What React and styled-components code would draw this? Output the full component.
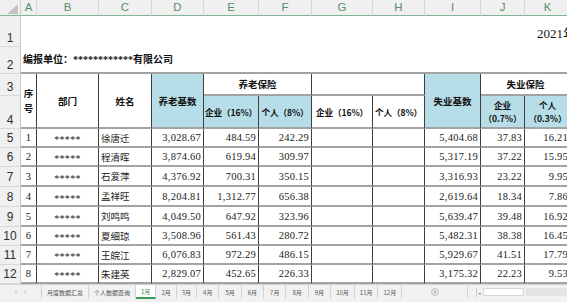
import React from "react";
import styled, { createGlobalStyle, css } from "styled-components";

const Global = createGlobalStyle`
  html, body { margin: 0; padding: 0; background: #fff; overflow: hidden; }
  #root { width: 567px; height: 302px; overflow: hidden; }
`;

const Page = styled.div`
  width: 567px;
  height: 302px;
  overflow: hidden;
  display: flex;
  flex-direction: column;
  font-family: "Liberation Serif", "Noto Sans CJK SC", serif;
  color: #1a1a1a;
`;

const Sheet = styled.div`
  display: grid;
  grid-template-columns: 21px 16px 62px 53px 52px 55px 53px 61px 52px 56px 44px 46px;
  grid-template-rows: 16px 31px 27px 22px 33px 19px 19px 20px 20px 20px 19px 19px 19px;
  width: 571px;
  flex: none;
`;

const Corner = styled.div`
  background: #f0f0f0;
  border-right: 1px solid #cfcfcf;
  border-bottom: 1px solid #7fb592;
  box-sizing: border-box;
  display: flex;
  align-items: flex-end;
  justify-content: flex-end;
  padding: 0 2px 1px 0;
`;

const ColHead = styled.div`
  box-sizing: border-box;
  background: #f0f0f0;
  border-right: 1px solid #d6d6d6;
  border-bottom: 1px solid #7fb592;
  font-family: "Liberation Sans", sans-serif;
  font-size: 11.5px;
  color: #5a8c69;
  display: flex;
  align-items: center;
  justify-content: center;
  line-height: 1;
`;

const RowHead = styled.div`
  box-sizing: border-box;
  background: #f0f0f0;
  border-right: 1px solid #c8c8c8;
  border-bottom: 1px solid #d9d9d9;
  font-family: "Liberation Sans", sans-serif;
  font-size: 12px;
  color: #2e2e2e;
  display: flex;
  justify-content: center;
  align-items: ${(p) => (p.$bottom ? "flex-end" : "center")};
  padding-bottom: ${(p) => (p.$bottom ? "2px" : "0")};
  line-height: 1;
`;

const TitleCell = styled.div`
  grid-column: span 11;
  box-sizing: border-box;
  display: flex;
  align-items: center;
  padding-left: 516px;
  padding-top: 2px;
  font-size: 13px;
  white-space: nowrap;
  overflow: hidden;
  color: #111;
`;

const UnitCell = styled.div`
  grid-column: span 11;
  box-sizing: border-box;
  display: flex;
  align-items: flex-end;
  padding: 0 0 6px 2px;
  font-size: 10px;
  font-weight: bold;
  white-space: nowrap;
  color: #111;
  border-bottom: 2px solid #a3a3a3;
`;

const Cell = styled.div`
  box-sizing: border-box;
  grid-column: span ${(p) => p.$cs || 1};
  grid-row: span ${(p) => p.$rs || 1};
  background: ${(p) => (p.$blue ? "#b7dee8" : "#fff")};
  border-right: 1px solid #3e3e3e;
  border-bottom: 2px solid #a3a3a3;
  display: flex;
  align-items: center;
  justify-content: ${(p) =>
    p.$align === "right" ? "flex-end" : p.$align === "left" ? "flex-start" : "center"};
  text-align: center;
  padding: ${(p) =>
    p.$align === "right" ? "0 2px 0 0" : p.$align === "left" ? "0 0 0 2px" : "0"};
  font-size: 10px;
  white-space: nowrap;
  overflow: hidden;
  ${(p) =>
    p.$head &&
    css`
      font-weight: bold;
      color: #111;
      font-family: "Noto Sans CJK SC", "Liberation Serif", sans-serif;
      font-size: ${p.$small ? 8.6 : 9.5}px;
      line-height: 12px;
      letter-spacing: ${p.$small ? -0.1 : 0}px;
    `}
  ${(p) =>
    p.$num &&
    css`
      font-size: 10.5px;
      letter-spacing: 0.25px;
      color: #222;
    `}
`;

const Stack = styled.span`
  display: flex;
  flex-direction: column;
  align-items: center;
  line-height: ${(p) => p.$lh || 13}px;
`;

const Stars = styled.span`
  display: inline-block;
  transform: translateY(2px);
  letter-spacing: 0.3px;
  font-size: 10px;
`;

const Name = styled.span`
  font-family: "Noto Sans CJK SC", sans-serif;
  font-size: 9.5px;
  color: #222;
`;

const TabBar = styled.div`
  flex: 1;
  display: flex;
  align-items: stretch;
  background: #f1f1f1;
  border-top: 1px solid #d0d0d0;
  box-sizing: border-box;
  padding-bottom: 3px;
  font-family: "Noto Sans CJK SC", sans-serif;
  font-size: 6px;
  color: #555;
`;

const Nav = styled.div`
  width: 42px;
  display: flex;
  align-items: center;
  justify-content: center;
  gap: 6px;
  color: #b5b5b5;
  font-size: 8px;
  border-right: 1px solid #d2d2d2;
  box-sizing: border-box;
  font-family: "DejaVu Sans", sans-serif;
`;

const Tab = styled.div`
  display: flex;
  align-items: center;
  padding: 0 ${(p) => p.$pad || 5}px;
  border-right: 1px solid #d2d2d2;
  white-space: nowrap;
  ${(p) =>
    p.$active &&
    css`
      background: #fff;
      color: #2f8a4f;
      border-bottom: 2px solid #3a9a5a;
    `}
`;

const AddBtn = styled.div`
  width: 66px;
  display: flex;
  align-items: center;
  justify-content: center;
  border-right: 1px solid #d2d2d2;
  box-sizing: border-box;
`;

const Scroll = styled.div`
  flex: 1;
  display: flex;
  align-items: center;
  padding-left: 8px;
  gap: 2px;
`;

const ScrollArrow = styled.div`
  width: 4px;
  height: 9px;
  display: flex;
  align-items: center;
  justify-content: center;
  color: #999;
  font-size: 5px;
  border-left: 1px solid #ccc;
`;

const Thumb = styled.div`
  width: 41px;
  height: 8px;
  background: #fff;
  border: 1px solid #d6d6d6;
  box-sizing: border-box;
`;

const Track = styled.div`
  flex: 1;
  height: 8px;
  background: #e4e4e4;
`;

const colLetters = ["A", "B", "C", "D", "E", "F", "G", "H", "I", "J", "K"];

const rows = [
  [1, "徐唐迁", "3,028.67", "484.59", "242.29", "5,404.68", "37.83", "16.21"],
  [2, "程清晖", "3,874.60", "619.94", "309.97", "5,317.19", "37.22", "15.95"],
  [3, "石爱萍", "4,376.92", "700.31", "350.15", "3,316.93", "23.22", "9.95"],
  [4, "孟祥旺", "8,204.81", "1,312.77", "656.38", "2,619.64", "18.34", "7.86"],
  [5, "刘鸣鸣", "4,049.50", "647.92", "323.96", "5,639.47", "39.48", "16.92"],
  [6, "夏细琼", "3,508.96", "561.43", "280.72", "5,482.31", "38.38", "16.45"],
  [7, "王皖江", "6,076.83", "972.29", "486.15", "5,929.67", "41.51", "17.79"],
  [8, "朱建英", "2,829.07", "452.65", "226.33", "3,175.32", "22.23", "9.53"],
];

const tabs = ["4月", "5月", "6月", "7月", "8月", "9月", "10月", "11月", "12月"];

export default function App() {
  return (
    <Page>
      <Global />
      <Sheet>
        <Corner>
          <svg width="11" height="10" viewBox="0 0 11 10">
            <polygon points="11,0 11,10 0,10" fill="#c4c4c4" />
          </svg>
        </Corner>
        {colLetters.map((c) => (
          <ColHead key={c}>{c}</ColHead>
        ))}

        <RowHead $bottom>1</RowHead>
        <TitleCell>2021年1月社会保险缴费明细表</TitleCell>

        <RowHead $bottom>2</RowHead>
        <UnitCell>编报单位：************有限公司</UnitCell>

        <RowHead $bottom>3</RowHead>
        <Cell $head $rs={2}>
          <Stack $lh={15}>
            <span>序</span>
            <span>号</span>
          </Stack>
        </Cell>
        <Cell $head $rs={2}>部门</Cell>
        <Cell $head $rs={2}>姓名</Cell>
        <Cell $head $rs={2} $blue>养老基数</Cell>
        <Cell $head $cs={2}>养老保险</Cell>
        <Cell $head $cs={2} />
        <Cell $head $rs={2} $blue>失业基数</Cell>
        <Cell $head $cs={2}>失业保险</Cell>

        <RowHead $bottom>4</RowHead>
        <Cell $head $small $blue>企业（16%）</Cell>
        <Cell $head $small $blue>个人（8%）</Cell>
        <Cell $head $small>企业（16%）</Cell>
        <Cell $head $small>个人（8%）</Cell>
        <Cell $head $small $blue>
          <Stack>
            <span>企业</span>
            <span>（0.7%）</span>
          </Stack>
        </Cell>
        <Cell $head $small $blue>
          <Stack>
            <span>个人</span>
            <span>（0.3%）</span>
          </Stack>
        </Cell>

        {rows.map((r, i) => (
          <React.Fragment key={r[0]}>
            <RowHead>{i + 5}</RowHead>
            <Cell $num>{r[0]}</Cell>
            <Cell>
              <Stars>*****</Stars>
            </Cell>
            <Cell $align="left">
              <Name>{r[1]}</Name>
            </Cell>
            <Cell $num $align="right">{r[2]}</Cell>
            <Cell $num $align="right">{r[3]}</Cell>
            <Cell $num $align="right">{r[4]}</Cell>
            <Cell />
            <Cell />
            <Cell $num $align="right">{r[5]}</Cell>
            <Cell $num $align="right">{r[6]}</Cell>
            <Cell $num $align="right">{r[7]}</Cell>
          </React.Fragment>
        ))}
      </Sheet>

      <TabBar>
        <Nav>
          <span>‹</span>
          <span>›</span>
        </Nav>
        <Tab>月度数据汇总</Tab>
        <Tab>个人数据查询</Tab>
        <Tab $active>1月</Tab>
        <Tab>2月</Tab>
        <Tab>3月</Tab>
        {tabs.map((t) => (
          <Tab key={t} $pad={t.length > 2 ? 5 : 6}>
            {t}
          </Tab>
        ))}
        <AddBtn>
          <svg width="8" height="8" viewBox="0 0 8 8">
            <circle cx="4" cy="4" r="3.4" fill="none" stroke="#aaa" strokeWidth="0.8" />
            <path d="M4 2.2V5.8M2.2 4H5.8" stroke="#aaa" strokeWidth="0.8" />
          </svg>
        </AddBtn>
        <Scroll>
          <ScrollArrow>◂</ScrollArrow>
          <Thumb />
          <Track />
        </Scroll>
      </TabBar>
    </Page>
  );
}
